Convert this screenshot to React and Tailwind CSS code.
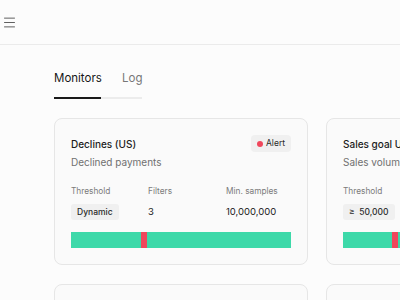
import { Menu } from 'lucide-react';

const monitors = [
  {
    title: 'Declines (US)',
    subtitle: 'Declined payments',
    alert: true,
    threshold: 'Dynamic',
    filters: '3',
    samples: '10,000,000',
    marker: 70,
  },
  {
    title: 'Sales goal US',
    subtitle: 'Sales volume',
    alert: false,
    threshold: '≥  50,000',
    filters: '2',
    samples: '1,000,000',
    marker: 49,
  },
];

function MonitorCard({ m }) {
  return (
    <div className="w-[254px] h-[147px] shrink-0 rounded-lg border border-[#e6e6e6] bg-[#fafafa] px-[16px] pt-[16px]">
      <div className="flex items-start justify-between">
        <div>
          <div className="text-[10px] leading-[18px] font-medium text-[#1c1c1c] whitespace-nowrap">{m.title}</div>
          <div className="mt-[1px] text-[10px] leading-[16px] text-[#707070] whitespace-nowrap">{m.subtitle}</div>
        </div>
        {m.alert && (
          <div className="flex items-center gap-[3px] rounded bg-[#f0f0f0] px-[6px] h-[17px] text-[8.5px] text-[#2a2a2a]">
            <span className="w-[6px] h-[6px] rounded-full bg-[#f0475c]" />
            Alert
          </div>
        )}
      </div>
      <div className="mt-[14px] grid grid-cols-[77px_78px_1fr] text-[8.3px] leading-[14px] text-[#7a7a7a] whitespace-nowrap">
        <div>Threshold</div>
        <div>Filters</div>
        <div>Min. samples</div>
      </div>
      <div className="mt-[6px] grid grid-cols-[77px_78px_1fr] items-center h-[16px] text-[9.5px] text-[#1c1c1c] whitespace-nowrap">
        <div>
          <span className="inline-flex items-center h-[16px] rounded-[3px] bg-[#f0f0f0] px-[6px] text-[8.5px] font-medium text-[#2a2a2a] whitespace-pre">
            {m.threshold}
          </span>
        </div>
        <div>{m.filters}</div>
        <div>{m.samples}</div>
      </div>
      <div className="relative mt-[12px] h-[16px] bg-[#3dd9a9]">
        <div className="absolute top-0 h-full w-[6px] bg-[#f0475c]" style={{ left: m.marker }} />
      </div>
    </div>
  );
}

export default function App() {
  return (
    <div className="w-[400px] h-[300px] overflow-hidden bg-[#fcfcfc] font-['Inter',sans-serif]">
      <header className="h-[45px] flex items-center border-b border-[#ebebeb] px-[2px]">
        <Menu size={15} strokeWidth={1.5} className="text-[#555]" />
      </header>
      <main className="pl-[54px] pt-[24px]">
        <div className="flex text-[11.5px] leading-[18px]">
          <div className="w-[47px] pb-[10px] border-b-2 border-[#1a1a1a] text-[#161616]">Monitors</div>
          <div className="w-[41px] pb-[10px] pl-[21px] border-b-2 border-[#ececec] text-[#777]">Log</div>
        </div>
        <div className="mt-[19px] flex gap-[18px]">
          {monitors.map(m => <MonitorCard key={m.title} m={m} />)}
        </div>
        <div className="mt-[19px] flex gap-[18px]">
          <div className="w-[254px] h-[40px] shrink-0 rounded-lg border border-[#e6e6e6] bg-[#fafafa]" />
          <div className="w-[254px] h-[40px] shrink-0 rounded-lg border border-[#e6e6e6] bg-[#fafafa]" />
        </div>
      </main>
    </div>
  );
}
